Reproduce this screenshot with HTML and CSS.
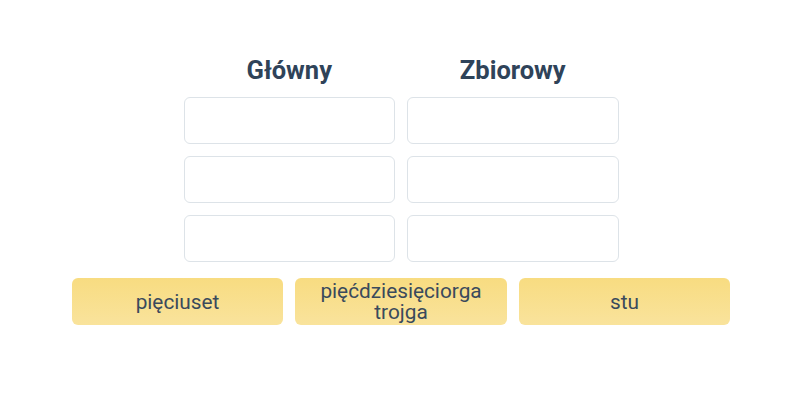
FILE: index.html
```html
<!DOCTYPE html>
<html lang="pl">
<head>
    <meta charset="UTF-8">
    <title>Główny / Zbiorowy</title>
    <link rel="stylesheet" href="styles.css">
</head>
<body>
    <div class="board">
        <div class="columns">
            <div class="column">
                <h2 class="column-title">Główny</h2>
                <div class="slot"></div>
                <div class="slot"></div>
                <div class="slot"></div>
            </div>
            <div class="column">
                <h2 class="column-title">Zbiorowy</h2>
                <div class="slot"></div>
                <div class="slot"></div>
                <div class="slot"></div>
            </div>
        </div>
        <div class="choices">
            <div class="choice">pięciuset</div>
            <div class="choice">pięćdziesięciorga trojga</div>
            <div class="choice">stu</div>
        </div>
    </div>
</body>
</html>
```

FILE: styles.css
```css
body {
    margin: 0;
    font-family: Roboto, 'Noto Sans', sans-serif;
    background-color: #fff;
    color: #34495e;
}
.board {
    width: 800px;
    height: 400px;
    padding-top: 55px;
    box-sizing: border-box;
    display: flex;
    flex-direction: column;
    align-items: center;
}
.columns {
    display: flex;
    gap: 12px;
    padding-left: 2px;
}
.column {
    width: 211.5px;
    display: flex;
    flex-direction: column;
    gap: 12px;
}
.column-title {
    margin: 0;
    font-size: 25.5px;
    font-weight: 700;
    line-height: 30px;
    text-align: center;
    color: #2f4359;
}
.slot {
    height: 47px;
    border: 1px solid #dde3e8;
    border-radius: 6px;
    box-sizing: border-box;
    background-color: #fff;
}
.choices {
    margin-top: 16px;
    padding-left: 2px;
    display: flex;
    gap: 12px;
}
.choice {
    width: 211.5px;
    height: 47px;
    box-sizing: border-box;
    padding: 1px 10px 0;
    border-radius: 6px;
    background: linear-gradient(180deg, #f8dc81 0%, #f9e39c 100%);
    display: flex;
    align-items: center;
    justify-content: center;
    text-align: center;
    font-size: 20.8px;
    line-height: 21px;
    color: #3a4a5c;
}
```
